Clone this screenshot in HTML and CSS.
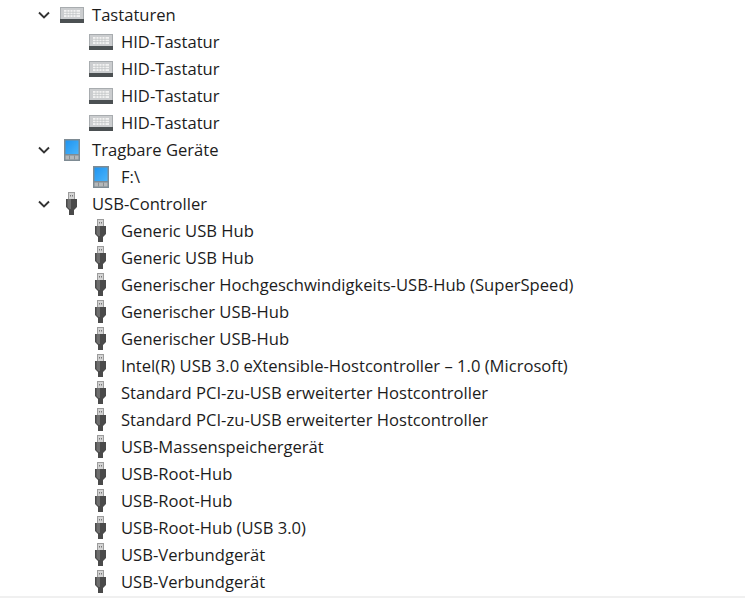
FILE: index.html
```html
<!DOCTYPE html>
<html lang="de">
<head>
    <meta charset="UTF-8">
    <title>Geräte-Manager</title>
    <link rel="stylesheet" href="styles.css">
</head>
<body>
    <svg class="defs" width="0" height="0">
        <defs>
            <linearGradient id="screen" x1="0" y1="0" x2="1" y2="1">
                <stop offset="0" stop-color="#1f94f0"/>
                <stop offset="1" stop-color="#4ab4fa"/>
            </linearGradient>
        </defs>
        <symbol id="keyboard" viewBox="0 0 24 16">
            <rect x="0" y="0" width="24" height="16" fill="#a8acaf"/>
            <rect x="1" y="1" width="22" height="11" fill="#cbcdcf"/>
            <rect x="0" y="12" width="24" height="4" fill="#4b5052"/>
            <rect x="4" y="3" width="16" height="7" fill="#f2f2f2"/>
            <path d="M4 5.3h16M4 7.6h16M7 3v7M10 3v7M13 3v7M16 3v7" stroke="#bfc1c3" stroke-width="0.7" fill="none"/>
        </symbol>
        <symbol id="portable" viewBox="0 0 16 22">
            <rect x="0" y="0" width="16" height="22" fill="#7e8b93"/>
            <rect x="1.5" y="1.5" width="13" height="13.5" fill="url(#screen)"/>
            <rect x="1.5" y="16.5" width="13" height="4" fill="#b4b8ba"/>
            <path d="M5.5 16.5v4M10.5 16.5v4" stroke="#8a8f92"/>
        </symbol>
        <symbol id="usb" viewBox="0 0 11 23">
            <path d="M2 0h7v7H2z" fill="#9c9c9c"/>
            <path d="M3 1h5v6H3z" fill="#d4d4d4"/>
            <path d="M4 3h1v1.5H4zM6 3h1v1.5H6z" fill="#777"/>
            <path d="M0 7h11v8l-3 3v5H3v-5l-3-3z" fill="#4a4a4a"/>
            <path d="M1.5 7H5v10H3.5l-2-2z" fill="#6e6e6e"/>
        </symbol>
    </svg>

    <ul class="tree">
        <li class="row group">
            <svg class="chevron" viewBox="0 0 12 8"><path d="M1 1.5l5 5 5-5"/></svg>
            <svg class="icon icon-keyboard"><use href="#keyboard"/></svg>
            <span>Tastaturen</span>
        </li>
        <li class="row child"><svg class="icon icon-keyboard"><use href="#keyboard"/></svg><span>HID-Tastatur</span></li>
        <li class="row child"><svg class="icon icon-keyboard"><use href="#keyboard"/></svg><span>HID-Tastatur</span></li>
        <li class="row child"><svg class="icon icon-keyboard"><use href="#keyboard"/></svg><span>HID-Tastatur</span></li>
        <li class="row child"><svg class="icon icon-keyboard"><use href="#keyboard"/></svg><span>HID-Tastatur</span></li>
        <li class="row group">
            <svg class="chevron" viewBox="0 0 12 8"><path d="M1 1.5l5 5 5-5"/></svg>
            <svg class="icon icon-portable"><use href="#portable"/></svg>
            <span>Tragbare Geräte</span>
        </li>
        <li class="row child"><svg class="icon icon-portable"><use href="#portable"/></svg><span>F:\</span></li>
        <li class="row group">
            <svg class="chevron" viewBox="0 0 12 8"><path d="M1 1.5l5 5 5-5"/></svg>
            <svg class="icon icon-usb"><use href="#usb"/></svg>
            <span>USB-Controller</span>
        </li>
        <li class="row child"><svg class="icon icon-usb"><use href="#usb"/></svg><span>Generic USB Hub</span></li>
        <li class="row child"><svg class="icon icon-usb"><use href="#usb"/></svg><span>Generic USB Hub</span></li>
        <li class="row child"><svg class="icon icon-usb"><use href="#usb"/></svg><span>Generischer Hochgeschwindigkeits-USB-Hub (SuperSpeed)</span></li>
        <li class="row child"><svg class="icon icon-usb"><use href="#usb"/></svg><span>Generischer USB-Hub</span></li>
        <li class="row child"><svg class="icon icon-usb"><use href="#usb"/></svg><span>Generischer USB-Hub</span></li>
        <li class="row child"><svg class="icon icon-usb"><use href="#usb"/></svg><span>Intel(R) USB 3.0 eXtensible-Hostcontroller – 1.0 (Microsoft)</span></li>
        <li class="row child"><svg class="icon icon-usb"><use href="#usb"/></svg><span>Standard PCI-zu-USB erweiterter Hostcontroller</span></li>
        <li class="row child"><svg class="icon icon-usb"><use href="#usb"/></svg><span>Standard PCI-zu-USB erweiterter Hostcontroller</span></li>
        <li class="row child"><svg class="icon icon-usb"><use href="#usb"/></svg><span>USB-Massenspeichergerät</span></li>
        <li class="row child"><svg class="icon icon-usb"><use href="#usb"/></svg><span>USB-Root-Hub</span></li>
        <li class="row child"><svg class="icon icon-usb"><use href="#usb"/></svg><span>USB-Root-Hub</span></li>
        <li class="row child"><svg class="icon icon-usb"><use href="#usb"/></svg><span>USB-Root-Hub (USB 3.0)</span></li>
        <li class="row child"><svg class="icon icon-usb"><use href="#usb"/></svg><span>USB-Verbundgerät</span></li>
        <li class="row child"><svg class="icon icon-usb"><use href="#usb"/></svg><span>USB-Verbundgerät</span></li>
    </ul>
</body>
</html>
```

FILE: styles.css
```css
html, body {
    margin: 0;
    height: 598px;
    overflow: hidden;
    background: #fff;
}
body {
    box-sizing: border-box;
    border-bottom: 2px solid #f0f0f0;
    font-family: "Open Sans", sans-serif;
    font-size: 16.6px;
    color: #1c1c1c;
}
.defs {
    position: absolute;
}
.tree {
    list-style: none;
    margin: 0;
    padding: 1px 0 0;
}
.row {
    display: flex;
    align-items: center;
    height: 27px;
    white-space: nowrap;
}
.group {
    padding-left: 38px;
}
.child {
    padding-left: 89px;
}
.chevron {
    width: 12px;
    height: 8px;
    margin-right: 10px;
    fill: none;
    stroke: #333;
    stroke-width: 1.9;
}
.icon {
    flex: none;
    display: block;
    filter: blur(0.5px);
}
.icon-keyboard {
    width: 24px;
    height: 16px;
    margin-right: 8px;
}
.icon-portable {
    width: 16px;
    height: 22px;
    margin-left: 4px;
    margin-right: 12px;
}
.icon-usb {
    width: 11px;
    height: 23px;
    margin-left: 6px;
    margin-right: 15px;
}
```
